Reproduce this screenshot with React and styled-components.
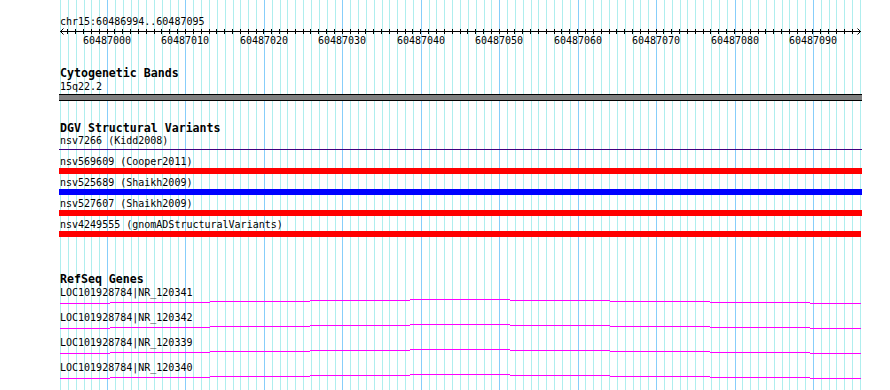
import React from "react";
import styled, { createGlobalStyle } from "styled-components";

const GlobalStyle = createGlobalStyle`
  html, body {
    margin: 0;
    padding: 0;
    background: #fff;
  }
`;

const START = 60486994;
const END = 60487095;
const LEFT = 60;
const ORIGIN = 59; // left edge of the track column
const BP = 800 / (END - START + 1);
const xOf = (pos) => LEFT + (pos - START) * BP;

const Panel = styled.div`
  position: relative;
  width: 890px;
  height: 390px;
  overflow: hidden;
  background: #fff;
  color: #000;
  font-family: "DejaVu Sans Mono", "Liberation Mono", monospace;
  font-size: 10px;
  line-height: 13px;
`;

const Grid = styled.svg`
  position: absolute;
  top: 0;
  left: 0;
  width: 890px;
  height: 390px;
`;

const Tracks = styled.div`
  position: relative;
  width: 803px;
  padding: 15px 0 0 ${ORIGIN}px;
`;

const Label = styled.div`
  padding-left: 1px;
  line-height: ${(p) => p.$lh || 13}px;
  white-space: pre;
`;

const RulerSvg = styled.svg`
  display: block;
  width: 803px;
  height: 18px;
  overflow: visible;
`;

const Track = styled.section`
  margin-top: ${(p) => p.$gap}px;
`;

const TrackTitle = styled.div`
  padding-left: 1px;
  font-weight: bold;
  font-size: 11.6px;
  line-height: 13px;
`;

const Band = styled.div`
  box-sizing: border-box;
  width: 803px;
  height: 7px;
  margin-top: 1px;
  background: #808080;
  border-top: 1px solid #000;
  border-bottom: 1px solid #000;
`;

const FeatureRow = styled.div`
  padding-bottom: 3px;
`;

const FeatureBar = styled.div`
  width: ${(p) => p.$width || 803}px;
  height: ${(p) => (p.$thin ? 1 : 6)}px;
  margin: ${(p) => (p.$thin ? "2px 0 3px" : "0")};
  background: ${(p) => p.$color};
`;

const GeneList = styled.div`
  padding-top: 1px;
`;

const GeneLine = styled.svg`
  display: block;
  width: 803px;
  height: 13px;
`;

const variants = [
  { label: "nsv7266 (Kidd2008)", color: "#400080", thin: true },
  { label: "nsv569609 (Cooper2011)", color: "#ff0000" },
  { label: "nsv525689 (Shaikh2009)", color: "#0000ff" },
  { label: "nsv527607 (Shaikh2009)", color: "#ff0000" },
  { label: "nsv4249555 (gnomADStructuralVariants)", color: "#ff0000", width: 802 },
];

const genes = [
  "LOC101928784|NR_120341",
  "LOC101928784|NR_120342",
  "LOC101928784|NR_120339",
  "LOC101928784|NR_120340",
];

const steps = [60, 110, 210, 310, 410, 510, 610, 710, 810, 861];
const stepY = [4, 3, 2, 1, 0, 1, 2, 3, 4];

function GridLines() {
  const lines = [];
  for (let k = 0; k <= END - START + 1; k++) {
    const major = (START + k) % 10 === 0;
    lines.push(
      <rect
        key={k}
        x={Math.round(LEFT + k * BP)}
        y={0}
        width={1}
        height={390}
        fill={major ? "#87cefa" : "#afeeee"}
      />
    );
  }
  return <Grid>{lines}</Grid>;
}

function Ruler() {
  const ticks = [];
  const labels = [];
  for (let pos = START + 1; pos < END + 1; pos++) {
    const x = Math.floor(xOf(pos)) - ORIGIN;
    ticks.push(<rect key={pos} x={x} y={1} width={1} height={5} fill="#000" />);
    if (pos % 10 === 0) {
      labels.push(
        <text
          key={pos}
          x={Math.round(xOf(pos)) - ORIGIN}
          y={16}
          textAnchor="middle"
          fontFamily='"DejaVu Sans Mono", monospace'
          fontSize="10"
        >
          {pos}
        </text>
      );
    }
  }
  const tip = 861 - ORIGIN;
  return (
    <RulerSvg>
      <rect x={1} y={3} width={tip - 1} height={1} fill="#000" />
      <path d={`M4.5 0.5 L1.5 3.5 L4.5 6.5`} stroke="#000" fill="none" />
      <path d={`M${tip - 3.5} 0.5 L${tip - 0.5} 3.5 L${tip - 3.5} 6.5`} stroke="#000" fill="none" />
      {ticks}
      {labels}
    </RulerSvg>
  );
}

function Gene({ name }) {
  return (
    <div>
      <Label $lh={12}>{name}</Label>
      <GeneLine>
        {stepY.map((y, i) => (
          <rect
            key={i}
            x={steps[i] - ORIGIN}
            y={y}
            width={steps[i + 1] - steps[i]}
            height={1}
            fill="#ff00ff"
          />
        ))}
      </GeneLine>
    </div>
  );
}

export default function App() {
  return (
    <Panel>
      <GlobalStyle />
      <GridLines />
      <Tracks>
        <Label>chr15:60486994..60487095</Label>
        <Ruler />

        <Track $gap={21}>
          <TrackTitle>Cytogenetic Bands</TrackTitle>
          <Label>15q22.2</Label>
          <Band />
        </Track>

        <Track $gap={21}>
          <TrackTitle>DGV Structural Variants</TrackTitle>
          {variants.map((v) => (
            <FeatureRow key={v.label}>
              <Label $lh={12}>{v.label}</Label>
              <FeatureBar $color={v.color} $thin={v.thin} $width={v.width} />
            </FeatureRow>
          ))}
        </Track>

        <Track $gap={33}>
          <TrackTitle>RefSeq Genes</TrackTitle>
          <GeneList>
            {genes.map((g) => (
              <Gene key={g} name={g} />
            ))}
          </GeneList>
        </Track>
      </Tracks>
    </Panel>
  );
}
